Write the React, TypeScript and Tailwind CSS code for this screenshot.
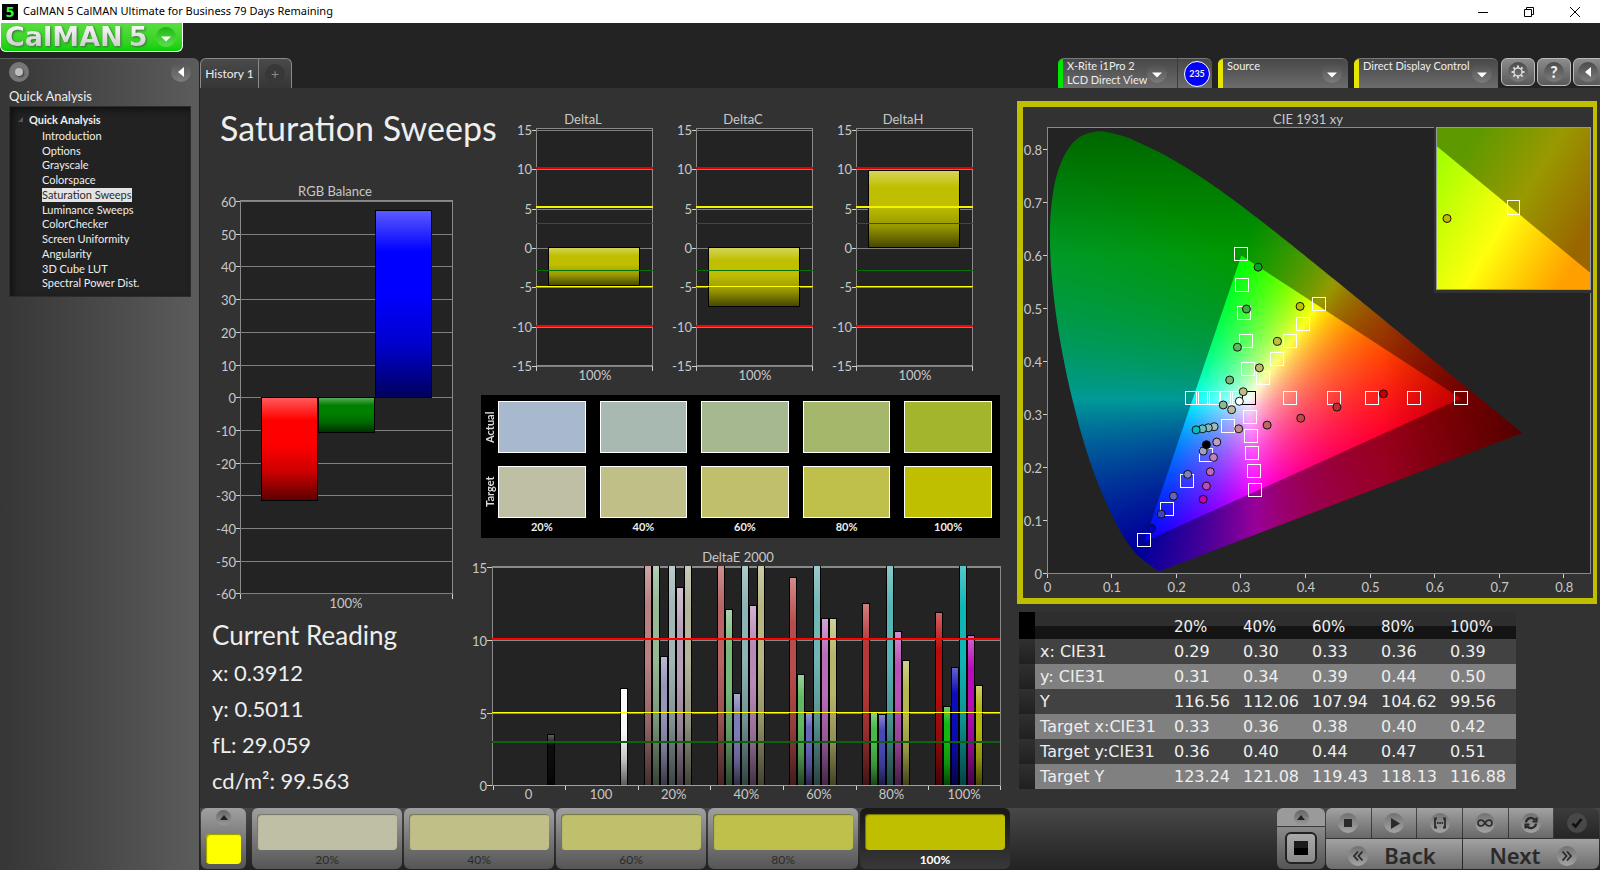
import React from 'react'

interface IBar {
    slot: number
    value: number
    color: string
}

interface ILimit {
    y: number
    color: string
    width: number
}

interface IMarker {
    x: number
    y: number
    color: string
}

const treeItems = [
    'Introduction',
    'Options',
    'Grayscale',
    'Colorspace',
    'Saturation Sweeps',
    'Luminance Sweeps',
    'ColorChecker',
    'Screen Uniformity',
    'Angularity',
    '3D Cube LUT',
    'Spectral Power Dist.',
]

const levels = ['20%', '40%', '60%', '80%', '100%']
const actualColors = ['#a9b9cd', '#a8b9b1', '#a6b890', '#a5b76b', '#a3b42d']
const targetColors = ['#bfbfa5', '#c0bf88', '#bfbf6c', '#bfbf4b', '#bfbf00']

const readings = ['x: 0.3912', 'y: 0.5011', 'fL: 29.059', 'cd/m²: 99.563']

const tableRows = [
    ['x: CIE31', '0.29', '0.30', '0.33', '0.36', '0.39'],
    ['y: CIE31', '0.31', '0.34', '0.39', '0.44', '0.50'],
    ['Y', '116.56', '112.06', '107.94', '104.62', '99.56'],
    ['Target x:CIE31', '0.33', '0.36', '0.38', '0.40', '0.42'],
    ['Target y:CIE31', '0.36', '0.40', '0.44', '0.47', '0.51'],
    ['Target Y', '123.24', '121.08', '119.43', '118.13', '116.88'],
]

const deltaLimits: ILimit[] = [
    { y: 60, color: '#e00000', width: 2 },
    { y: 99, color: '#f4f400', width: 2 },
    { y: 115.5, color: '#087008', width: 1 },
    { y: 162.5, color: '#087008', width: 1 },
    { y: 178.5, color: '#ffff00', width: 1 },
    { y: 218, color: '#ff0000', width: 2 },
]

// red, green, blue, cyan, magenta, yellow, gray
const deltaE: { label: string; bars: IBar[] }[] = [
    { label: '0', bars: [{ slot: 6, value: 3.5, color: '#0c0c0c' }] },
    { label: '100', bars: [{ slot: 6, value: 6.7, color: '#f8f8f8' }] },
    {
        label: '20%',
        bars: [
            { slot: 0, value: 16, color: '#b98080' },
            { slot: 1, value: 16, color: '#95b895' },
            { slot: 2, value: 8.9, color: '#9595bb' },
            { slot: 3, value: 16, color: '#a2b6b6' },
            { slot: 4, value: 13.6, color: '#b89fb8' },
            { slot: 5, value: 16, color: '#b5b59c' },
        ],
    },
    {
        label: '40%',
        bars: [
            { slot: 0, value: 16, color: '#b86464' },
            { slot: 1, value: 12.1, color: '#7ab87a' },
            { slot: 2, value: 6.3, color: '#7c7cb8' },
            { slot: 3, value: 16, color: '#8cb4b4' },
            { slot: 4, value: 12.4, color: '#b888b8' },
            { slot: 5, value: 16, color: '#b6b682' },
        ],
    },
    {
        label: '60%',
        bars: [
            { slot: 0, value: 14.3, color: '#b84c4c' },
            { slot: 1, value: 7.6, color: '#60b860' },
            { slot: 2, value: 5.1, color: '#6464b8' },
            { slot: 3, value: 16, color: '#72b5b5' },
            { slot: 4, value: 11.5, color: '#b86cb8' },
            { slot: 5, value: 11.5, color: '#b6b668' },
        ],
    },
    {
        label: '80%',
        bars: [
            { slot: 0, value: 12.5, color: '#b83838' },
            { slot: 1, value: 5, color: '#48b848' },
            { slot: 2, value: 4.9, color: '#4848b8' },
            { slot: 3, value: 16, color: '#58b5b5' },
            { slot: 4, value: 10.6, color: '#b850b8' },
            { slot: 5, value: 8.6, color: '#b6b650' },
        ],
    },
    {
        label: '100%',
        bars: [
            { slot: 0, value: 11.9, color: '#b80c0c' },
            { slot: 1, value: 5.4, color: '#10b810' },
            { slot: 2, value: 8.1, color: '#0c0cb8' },
            { slot: 3, value: 16, color: '#10b5b5' },
            { slot: 4, value: 10.3, color: '#b80cb8' },
            { slot: 5, value: 6.9, color: '#b6b610' },
        ],
    },
]

const locusPoints = [
    [0.1741, 0.005], [0.1714, 0.0051], [0.1644, 0.0109], [0.1566, 0.0177], [0.144, 0.0297], [0.1355, 0.0399],
    [0.1241, 0.0578], [0.1096, 0.0868], [0.0913, 0.1327], [0.0687, 0.2007], [0.0454, 0.295], [0.0235, 0.4127],
    [0.0082, 0.5384], [0.0039, 0.6548], [0.0139, 0.7502], [0.0389, 0.812], [0.0743, 0.8338], [0.1142, 0.8262],
    [0.1547, 0.8059], [0.1929, 0.7816], [0.2296, 0.7543], [0.2658, 0.7243], [0.3016, 0.6923], [0.3373, 0.6589],
    [0.3731, 0.6245], [0.4087, 0.5896], [0.4441, 0.5547], [0.4788, 0.5202], [0.5125, 0.4866], [0.5752, 0.4242],
    [0.627, 0.3725], [0.6658, 0.334], [0.6915, 0.3083], [0.719, 0.2809], [0.7347, 0.2653],
]
const gamut = [[0.64, 0.33], [0.3, 0.6], [0.15, 0.06]]

// Catmull-Rom subdivision of an open curve
const smooth = (pts: number[][], steps: number) => {
    const out: number[][] = []
    for (let i = 0; i < pts.length - 1; i++) {
        const p0 = pts[Math.max(0, i - 1)]
        const p1 = pts[i]
        const p2 = pts[i + 1]
        const p3 = pts[Math.min(pts.length - 1, i + 2)]
        for (let s = 0; s < steps; s++) {
            const t = s / steps
            out.push([0, 1].map((k) =>
                0.5 * (2 * p1[k] + (p2[k] - p0[k]) * t + (2 * p0[k] - 5 * p1[k] + 4 * p2[k] - p3[k]) * t * t +
                    (3 * p1[k] - p0[k] - 3 * p2[k] + p3[k]) * t * t * t)
            ))
        }
    }
    out.push(pts[pts.length - 1])
    return out
}

const locus = smooth(locusPoints, 6)

const targets: number[][] = [
    [0.3, 0.603], [0.301, 0.544], [0.304, 0.492], [0.307, 0.438], [0.31, 0.386],
    [0.42, 0.509], [0.396, 0.47], [0.376, 0.438], [0.356, 0.404], [0.333, 0.368],
    [0.223, 0.331], [0.241, 0.331], [0.258, 0.331], [0.276, 0.331], [0.294, 0.331],
    [0.375, 0.331], [0.444, 0.331], [0.502, 0.331], [0.567, 0.331], [0.64, 0.331],
    [0.313, 0.295], [0.315, 0.259], [0.316, 0.227], [0.319, 0.193], [0.321, 0.157],
    [0.279, 0.278], [0.246, 0.224], [0.216, 0.174], [0.185, 0.122], [0.149, 0.063],
]

const measured: IMarker[] = [
    { x: 0.326, y: 0.578, color: '#00a81c' },
    { x: 0.308, y: 0.499, color: '#3cb43c' },
    { x: 0.294, y: 0.427, color: '#5fb85f' },
    { x: 0.282, y: 0.365, color: '#74b874' },
    { x: 0.272, y: 0.318, color: '#90b890' },
    { x: 0.391, y: 0.504, color: '#bfbf00' },
    { x: 0.356, y: 0.438, color: '#bcbc48' },
    { x: 0.328, y: 0.388, color: '#bcbc68' },
    { x: 0.303, y: 0.343, color: '#bdbd85' },
    { x: 0.285, y: 0.309, color: '#bcbca0' },
    { x: 0.258, y: 0.277, color: '#a0bcbc' },
    { x: 0.249, y: 0.275, color: '#84bcbc' },
    { x: 0.24, y: 0.273, color: '#68bcbc' },
    { x: 0.23, y: 0.271, color: '#00c0c0' },
    { x: 0.296, y: 0.273, color: '#c09090' },
    { x: 0.34, y: 0.28, color: '#c06464' },
    { x: 0.392, y: 0.293, color: '#c04848' },
    { x: 0.448, y: 0.314, color: '#c03030' },
    { x: 0.52, y: 0.339, color: '#c00000' },
    { x: 0.262, y: 0.248, color: '#bfa0bf' },
    { x: 0.257, y: 0.219, color: '#bf84bf' },
    { x: 0.252, y: 0.192, color: '#bf68bf' },
    { x: 0.246, y: 0.165, color: '#bf48bf' },
    { x: 0.241, y: 0.14, color: '#bf00bf' },
    { x: 0.241, y: 0.231, color: '#a0a0bf' },
    { x: 0.246, y: 0.243, color: '#000000' },
    { x: 0.217, y: 0.187, color: '#8080bf' },
    { x: 0.195, y: 0.146, color: '#6464bf' },
    { x: 0.176, y: 0.112, color: '#4444bf' },
    { x: 0.161, y: 0.085, color: '#0000bf' },
    { x: 0.297, y: 0.325, color: '#ffffff' },
]

// chromaticity to plot coordinates
const px = (x: number) => 24.5 + 646 * x
const py = (y: number) => 466.5 - 530 * y

const toPoints = (poly: number[][]) => poly.map(([x, y]) => `${px(x).toFixed(1)},${py(y).toFixed(1)}`).join(' ')

const xyToColor = (x: number, y: number, gain: number) => {
    const X = x / y
    const Z = (1 - x - y) / y
    const lin = [
        3.2406 * X - 1.5372 - 0.4986 * Z,
        -0.9689 * X + 1.8758 + 0.0415 * Z,
        0.0557 * X - 0.204 + 1.057 * Z,
    ].map((c) => Math.max(0, c))
    const max = Math.max(...lin)
    const fade = Math.min(1, 1 - Math.max(0, x - 0.52) * 2.1) * Math.min(1, 1 - Math.max(0, y - 0.6) * 1.4)
    const rgb = lin.map((c) => Math.round((255 * gain * fade * c) / max))
    return `rgb(${rgb.join(',')})`
}

// leftmost and rightmost x of a polygon at height y
const span = (poly: number[][], y: number) => {
    const xs: number[] = []
    poly.forEach(([x1, y1], i) => {
        const [x2, y2] = poly[(i + 1) % poly.length]
        if ((y1 <= y && y2 > y) || (y2 <= y && y1 > y)) {
            xs.push(x1 + ((y - y1) / (y2 - y1)) * (x2 - x1))
        }
    })
    return xs.length ? [Math.min(...xs), Math.max(...xs)] : null
}

const Strips: React.FC<{ id: string; poly: number[][]; gain: number; stops: number }> = ({ id, poly, gain, stops }) => {
    const rows: React.ReactNode[] = []
    for (let top = 22; top < 466; top += 2) {
        const y = Math.max(0.004, (466.5 - top - 1) / 530)
        const s = span(poly, y) || span(poly, y - 0.004) || span(poly, y + 0.004)
        if (!s) continue
        const a = s[0] - 0.012
        const b = s[1] + 0.012
        rows.push(
            <g key={top}>
                <linearGradient id={`${id}${top}`} gradientUnits="userSpaceOnUse" x1={px(a)} x2={px(b)} y1="0" y2="0">
                    {Array.from({ length: stops + 1 }, (_, i) => (
                        <stop key={i} offset={i / stops} stopColor={xyToColor(a + ((b - a) * i) / stops, y, gain)} />
                    ))}
                </linearGradient>
                <rect x={px(a)} y={top} width={px(b) - px(a)} height="2" fill={`url(#${id}${top})`} shapeRendering="crispEdges" />
            </g>
        )
    }
    return (
        <g clipPath={`url(#${id}clip)`}>
            <clipPath id={`${id}clip`}>
                <polygon points={toPoints(poly)} />
            </clipPath>
            {rows}
        </g>
    )
}

const GlossBar: React.FC<{ x: number; y: number; w: number; h: number; color: string }> = ({ x, y, w, h, color }) => (
    <g shapeRendering="crispEdges">
        <rect x={x} y={y} width={w} height={h} fill={color} />
        <rect x={x} y={y} width={w} height={h} fill="url(#gloss)" stroke="#000" />
    </g>
)

const Gloss: React.FC = () => (
    <svg width="0" height="0" className="absolute" aria-hidden="true">
        <linearGradient id="gloss" x1="0" y1="0" x2="0" y2="1">
            <stop offset="0" stopColor="#fff" stopOpacity="0.36" />
            <stop offset="0.22" stopColor="#fff" stopOpacity="0" />
            <stop offset="0.45" stopColor="#000" stopOpacity="0" />
            <stop offset="0.72" stopColor="#000" stopOpacity="0.2" />
            <stop offset="1" stopColor="#000" stopOpacity="0.64" />
        </linearGradient>
    </svg>
)

const DeltaChart: React.FC<{ title: string; top: number; height: number }> = ({ title, top, height }) => (
    <svg viewBox="0 0 160 280" className="h-auto w-full text-[13px]" role="img" aria-label={title}>
        <text x="83" y="16" textAnchor="middle" fill="#c8c8c8">{title}</text>
        <rect x="36.5" y="20.5" width="116" height="237" fill="#232323" stroke="#8a8a8a" shapeRendering="crispEdges" />
        {[15, 10, 5, 0, -5, -10, -15].map((v, i) => {
            const y = Math.round(22 + i * 39.3) + 0.5
            return (
                <g key={v}>
                    <path d={`M36 ${y}H152`} stroke="#808080" shapeRendering="crispEdges" />
                    <path d={`M32 ${y}H36`} stroke="#d0d0d0" shapeRendering="crispEdges" />
                    <text x="32" y={y + 4} textAnchor="end" fill="#c8c8c8">{v}</text>
                </g>
            )
        })}
        <path d="M36.5 258V263M152.5 258V263" stroke="#d0d0d0" shapeRendering="crispEdges" />
        <GlossBar x={48.5} y={top + 0.5} w={91} h={height} color="#bfbf00" />
        {deltaLimits.map((l) => (
            <path key={l.y} d={`M36 ${l.y}H153`} stroke={l.color} strokeWidth={l.width} shapeRendering="crispEdges" />
        ))}
        <text x="95" y="272" textAnchor="middle" fill="#c8c8c8">100%</text>
    </svg>
)

const RgbBalance: React.FC = () => (
    <svg viewBox="0 0 270 435" className="h-auto w-full text-[13px]" role="img" aria-label="RGB Balance">
        <text x="135" y="16" textAnchor="middle" fill="#c8c8c8">RGB Balance</text>
        <rect x="40.5" y="20.5" width="212" height="393" fill="#232323" stroke="#8a8a8a" shapeRendering="crispEdges" />
        {[60, 50, 40, 30, 20, 10, 0, -10, -20, -30, -40, -50, -60].map((v, i) => {
            const y = Math.round(21 + i * 32.7) + 0.5
            return (
                <g key={v}>
                    <path d={`M40 ${y}H252`} stroke="#808080" shapeRendering="crispEdges" />
                    <path d={`M36 ${y}H40`} stroke="#d0d0d0" shapeRendering="crispEdges" />
                    <text x="36" y={y + 5} textAnchor="end" fill="#c8c8c8">{v}</text>
                </g>
            )
        })}
        <path d="M40.5 414V419M252.5 414V419" stroke="#d0d0d0" shapeRendering="crispEdges" />
        <GlossBar x={61.5} y={217.5} w={56} h={103} color="#ff0000" />
        <GlossBar x={118.5} y={217.5} w={56} h={35} color="#008000" />
        <GlossBar x={175.5} y={30.5} w={56} h={187} color="#0000ff" />
        <text x="146" y="428" textAnchor="middle" fill="#c8c8c8">100%</text>
    </svg>
)

const DeltaE: React.FC = () => (
    <svg viewBox="0 0 540 260" className="h-auto w-full text-[13px]" role="img" aria-label="DeltaE 2000">
        <text x="268" y="17" textAnchor="middle" fill="#c8c8c8">DeltaE 2000</text>
        <rect x="22.5" y="21.5" width="508" height="219" fill="#232323" stroke="#8a8a8a" shapeRendering="crispEdges" />
        {[15, 10, 5, 0].map((v, i) => {
            const y = Math.round(22 + i * 72.8) + 0.5
            return (
                <g key={v}>
                    <path d={`M22 ${y}H530`} stroke="#8a8a8a" shapeRendering="crispEdges" />
                    <path d={`M17 ${y}H22`} stroke="#d0d0d0" shapeRendering="crispEdges" />
                    <text x="17" y={y + 5} textAnchor="end" fill="#c8c8c8">{v}</text>
                </g>
            )
        })}
        <clipPath id="plotClip">
            <rect x="22" y="21" width="509" height="220" />
        </clipPath>
        {deltaE.map((g, i) => {
            const left = 22.5 + i * 72.6
            return (
                <g key={g.label}>
                    <g clipPath="url(#plotClip)">
                        {g.bars.map((b) => {
                            const top = b.value > 15 ? 10.5 : Math.round(240 - b.value * 14.55) + 0.5
                            return <GlossBar key={b.slot} x={Math.round(left + 6.5 + b.slot * 8) + 0.5} y={top} w={7} h={240.5 - top} color={b.color} />
                        })}
                    </g>
                    <path d={`M${Math.round(left) + 0.5} 241V245`} stroke="#d0d0d0" shapeRendering="crispEdges" />
                    <text x={left + 36} y="254" textAnchor="middle" fill="#c8c8c8">{g.label}</text>
                </g>
            )
        })}
        <path d="M530.5 241V245" stroke="#d0d0d0" shapeRendering="crispEdges" />
        <path d="M22 94H530" stroke="#f00" strokeWidth="2" shapeRendering="crispEdges" />
        <path d="M22 167.5H530" stroke="#ff0" shapeRendering="crispEdges" />
        <path d="M22 197H530" stroke="#0f600f" strokeWidth="2" shapeRendering="crispEdges" />
        <path d="M22.5 240.5H530" stroke="#a0a0a0" shapeRendering="crispEdges" />
    </svg>
)

const CieChart: React.FC = () => (
    <svg viewBox="0 0 570 491" className="h-auto w-full text-[13px]" role="img" aria-label="CIE 1931 xy">
        <text x="285" y="17" textAnchor="middle" fill="#c8c8c8">CIE 1931 xy</text>
        <rect x="24.5" y="20.5" width="543" height="446" fill="#232323" stroke="#8a8a8a" shapeRendering="crispEdges" />
        {[0, 0.1, 0.2, 0.3, 0.4, 0.5, 0.6, 0.7, 0.8].map((v) => (
            <g key={v}>
                <path
                    d={`M20 ${Math.round(py(v)) - 0.5}H24M${Math.round(px(v)) - 0.5} 467V471`}
                    stroke="#d0d0d0"
                    shapeRendering="crispEdges"
                />
                <text x="19" y={py(v) + 5} textAnchor="end" fill="#c8c8c8">{v}</text>
                <text x={px(v)} y="485" textAnchor="middle" fill="#c8c8c8">{v}</text>
            </g>
        ))}
        <Strips id="outer" poly={locus} gain={0.6} stops={44} />
        <Strips id="inner" poly={gamut} gain={1} stops={40} />
        <g fill="none" stroke="#fff" strokeWidth="1" shapeRendering="crispEdges">
            {targets.map(([x, y], i) => (
                <rect key={i} x={Math.round(px(x)) - 6.5} y={Math.round(py(y)) - 6.5} width="13" height="13" />
            ))}
            <rect x="219.5" y="284.5" width="13" height="13" stroke="#000" />
        </g>
        {measured.map((m, i) => (
            <circle key={i} cx={px(m.x)} cy={py(m.y)} r="4" fill={m.color} stroke="#111" strokeWidth="1" />
        ))}
        <linearGradient id="zoomDim" gradientUnits="userSpaceOnUse" x1="430" y1="66" x2="554" y2="141">
            <stop offset="0" stopColor="#5f9900" />
            <stop offset="0.5" stopColor="#999900" />
            <stop offset="1" stopColor="#996600" />
        </linearGradient>
        <linearGradient id="zoomLit" gradientUnits="userSpaceOnUse" x1="400" y1="58" x2="554" y2="151">
            <stop offset="0" stopColor="#99ff00" />
            <stop offset="0.55" stopColor="#ffff0c" />
            <stop offset="0.9" stopColor="#ffb400" />
            <stop offset="1" stopColor="#ffa000" />
        </linearGradient>
        <rect x="411" y="18" width="159" height="168" fill="#323232" />
        <rect x="413.5" y="20.5" width="154" height="162" fill="url(#zoomDim)" />
        <polygon points="413.5,39 567.5,166 567.5,182.5 413.5,182.5" fill="url(#zoomLit)" />
        <rect x="413.5" y="20.5" width="154" height="162" fill="none" stroke="#999" shapeRendering="crispEdges" />
        <rect x="484.5" y="93.5" width="12" height="14" fill="none" stroke="#fff" shapeRendering="crispEdges" />
        <circle cx="424" cy="111.5" r="4" fill="#bfbf00" stroke="#111" />
    </svg>
)

const Knob: React.FC<{ children: React.ReactNode }> = ({ children }) => (
    <span className="flex size-5 shrink-0 items-center justify-center rounded-full bg-linear-to-b from-[#4c4c4c] to-[#7c7c7c]">
        {children}
    </span>
)

const DownArrow: React.FC = () => (
    <svg width="10" height="6" viewBox="0 0 10 6" className="mt-1">
        <path d="M0 0.5H10L5 5.5Z" fill="#fff" />
    </svg>
)

const DeviceBox: React.FC<{ lines: string[]; bar: string; className: string }> = ({ lines, bar, className }) => (
    <button className={`flex h-[30px] items-start overflow-hidden rounded-t-md border-t border-[#7a7a7a] bg-linear-to-b from-[#484848] to-[#6c6c6c] text-left ${className}`}>
        <span className={`mr-1 h-full w-[5px] shrink-0 ${bar}`} />
        <span className="flex-1 text-[11px] leading-[14px] whitespace-nowrap">
            {lines.map((l) => (
                <span key={l} className="block">{l}</span>
            ))}
        </span>
        <span className="mt-1 mr-[6px] flex">
            <Knob><DownArrow /></Knob>
        </span>
    </button>
)

const TitleBar: React.FC = () => (
    <div className="flex h-[23px] items-center bg-white px-[2px] font-['Noto_Sans',sans-serif] text-black">
        <span className="flex size-4 items-center justify-center bg-black text-[15px] font-bold text-[#2bff2b]">5</span>
        <span className="ml-[5px] flex-1 text-[11px]">CalMAN 5 CalMAN Ultimate for Business 79 Days Remaining</span>
        <button aria-label="Minimize" className="flex w-[46px] justify-center">
            <svg width="10" height="10"><path d="M0 5.5H10" stroke="#000" /></svg>
        </button>
        <button aria-label="Restore" className="flex w-[46px] justify-center">
            <svg width="10" height="10" fill="none" stroke="#000"><path d="M0.5 2.5H7.5V9.5H0.5ZM2.5 2.5V0.5H9.5V7.5H7.5" /></svg>
        </button>
        <button aria-label="Close" className="flex w-[46px] justify-center">
            <svg width="10" height="10" stroke="#000"><path d="M0 0L10 10M10 0L0 10" /></svg>
        </button>
    </div>
)

const logoText = 'bg-linear-to-b from-white to-[#c4c4c4] bg-clip-text leading-[28px] font-bold text-transparent drop-shadow-[1px_1px_1px_#3c6b3c]'

const Sidebar: React.FC = () => (
    <div className="flex w-[199px] shrink-0 flex-col">
        <button className="mb-[6px] flex h-[29px] w-[183px] items-center rounded-b-md border border-t-0 border-white bg-linear-to-b from-[#5add40] to-[#00d000] pl-1 font-['DejaVu_Sans',sans-serif] text-[27px]">
            <span className={logoText}>CalMAN</span>
            <span className={`ml-[6px] ${logoText}`}>5</span>
            <span className="ml-auto mr-[6px] flex size-5 items-center justify-center rounded-full bg-linear-to-b from-[#12b812] to-[#5ce04a]">
                <DownArrow />
            </span>
        </button>
        <aside className="flex-1 rounded-tr-md border-t border-[#5c5c5c] bg-linear-to-r from-[#363636] to-[#5c5c5c] px-[9px] pr-2">
            <div className="mt-[3px] flex items-center justify-between">
                <span className="flex size-5 items-center justify-center rounded-full bg-[#777]">
                    <span className="size-2 rounded-full bg-[#bdbdbd] shadow-[1px_1px_2px_#333]" />
                </span>
                <button aria-label="Collapse" className="flex size-5 items-center justify-center rounded-full bg-linear-to-b from-[#555] to-[#7c7c7c]">
                    <svg width="6" height="10"><path d="M6 0V10L0 5Z" fill="#fff" /></svg>
                </button>
            </div>
            <h2 className="mt-1 text-[13px] leading-5">Quick Analysis</h2>
            <nav className="h-[191px] border border-[#2c2c2c] bg-[#222] pt-[6px] pl-2 shadow-[inset_3px_3px_6px_#111]">
                <div className="flex items-center text-[11px] leading-[14px] font-bold">
                    <svg width="6" height="6" className="mr-[5px]"><path d="M5 0V5H0Z" fill="#555" /></svg>
                    Quick Analysis
                </div>
                <ul className="mt-[2px] grid h-[162px] auto-rows-fr pl-6 text-[11px] leading-[14px]">
                    {treeItems.map((item) => (
                        <li key={item}>
                            <a href="#" className={item === 'Saturation Sweeps' ? 'block w-fit bg-[#e4e4e4] text-[#2a2a2a]' : 'block w-fit'}>
                                {item}
                            </a>
                        </li>
                    ))}
                </ul>
            </nav>
        </aside>
    </div>
)

const squareButton =
    'flex h-7 w-[34px] items-center justify-center rounded-md border border-[#bbb] bg-linear-to-b from-[#8c8c8c] to-[#5a5a5a]'

const Header: React.FC = () => (
    <header className="flex h-[65px] items-end overflow-hidden">
        <div className="flex h-[30px] overflow-hidden rounded-t-md border border-b-0 border-[#8a8a8a] bg-linear-to-b from-[#4a4a4a] to-[#363636]">
            <button className="w-[58px] border-r border-[#8a8a8a] text-xs">History 1</button>
            <button aria-label="Add tab" className="flex w-8 items-center justify-center">
                <span className="flex size-5 items-center justify-center rounded-full bg-[#383838] text-sm text-[#8a8a8a]">+</span>
            </button>
        </div>
        <div className="ml-auto flex shrink-0 items-start">
            <DeviceBox lines={['X-Rite i1Pro 2', 'LCD Direct View']} bar="bg-[#00e600]" className="w-[119px] rounded-r-none pr-1" />
            <div className="mr-[6px] flex h-[30px] w-[35px] items-center justify-center rounded-tr-md border-t border-l border-[#3c3c3c] border-t-[#7a7a7a] bg-linear-to-b from-[#484848] to-[#6c6c6c] pl-1">
                <span className="flex size-[26px] items-center justify-center rounded-full border border-white bg-[#0000ff] text-[9px] font-bold">235</span>
            </div>
            <DeviceBox lines={['Source']} bar="bg-[#e6e600]" className="mr-[6px] w-[130px]" />
            <DeviceBox lines={['Direct Display Control']} bar="bg-[#e6e600]" className="mr-[3px] w-36" />
            <button aria-label="Settings" className={`mr-[2px] ${squareButton}`}>
                <Knob>
                    <svg width="14" height="14" viewBox="0 0 14 14" stroke="#d8d8d8" fill="none">
                        <circle cx="7" cy="7" r="4" strokeWidth="1.5" />
                        <path d="M7 0.5V3M7 11V13.5M0.5 7H3M11 7H13.5M2.4 2.4L4.2 4.2M9.8 9.8L11.6 11.6M2.4 11.6L4.2 9.8M9.8 4.2L11.6 2.4" strokeWidth="2" />
                    </svg>
                </Knob>
            </button>
            <button aria-label="Help" className={`mr-[2px] ${squareButton}`}>
                <Knob><span className="text-base font-black">?</span></Knob>
            </button>
            <button aria-label="Collapse panel" className={`-mr-[7px] justify-start pl-1 ${squareButton}`}>
                <Knob>
                    <svg width="6" height="10"><path d="M6 0V10L0 5Z" fill="#fff" /></svg>
                </Knob>
            </button>
        </div>
    </header>
)

const SwatchRow: React.FC<{ label: string; colors: string[] }> = ({ label, colors }) => (
    <div className="flex h-[52px]">
        <span className="w-[17px] rotate-180 text-center text-[11px] leading-[17px] font-bold text-[#ddd] [writing-mode:vertical-rl]">{label}</span>
        <div className="grid flex-1 grid-cols-5 gap-[14px]">
            {colors.map((c) => (
                <div key={c} className="border border-white" style={{ backgroundColor: c }} />
            ))}
        </div>
    </div>
)

const Swatches: React.FC = () => (
    <div className="mt-[7px] mr-[10px] ml-[11px] h-[143px] bg-black pt-[6px] pr-2">
        <SwatchRow label="Actual" colors={actualColors} />
        <div className="h-[13px]" />
        <SwatchRow label="Target" colors={targetColors} />
        <div className="grid grid-cols-5 gap-[14px] pt-px pl-[17px] text-center text-[11px] leading-4 font-bold">
            {levels.map((l) => (
                <span key={l}>{l}</span>
            ))}
        </div>
    </div>
)

const ReadingTable: React.FC = () => (
    <table className="mt-2 ml-[9px] w-[497px] table-fixed border-collapse text-left font-['DejaVu_Sans',sans-serif] text-[16px] text-[#eee]">
        <colgroup>
            <col className="w-4" />
            <col className="w-[139px]" />
            <col className="w-[69px]" />
            <col className="w-[69px]" />
            <col className="w-[69px]" />
            <col className="w-[69px]" />
            <col />
        </colgroup>
        <thead>
            <tr className="h-[27px] bg-linear-to-b from-[#2e2e2e] from-50% to-[#141414] to-50%">
                <th className="bg-black p-0" />
                <th className="p-0" />
                {levels.map((l) => (
                    <th key={l} className="p-0 pt-1 text-[15px] leading-[23px] font-normal">{l}</th>
                ))}
            </tr>
        </thead>
        <tbody>
            {tableRows.map((row, i) => (
                <tr key={row[0]} className={i % 2 ? 'h-[25px] bg-[#808080]' : 'h-[25px] bg-[#424242]'}>
                    <td className="bg-linear-to-b from-[#303030] to-[#202020] p-0" />
                    {row.map((cell, j) => (
                        <td key={j} className={j === 0 ? 'p-0 pl-[5px] leading-[25px] whitespace-nowrap' : 'p-0 leading-[25px]'}>
                            {cell}
                        </td>
                    ))}
                </tr>
            ))}
        </tbody>
    </table>
)

const Disc: React.FC<{ children: React.ReactNode; dark?: boolean }> = ({ children, dark }) => (
    <span
        className={
            dark
                ? 'flex size-5 items-center justify-center rounded-full bg-[#484848]'
                : 'flex size-5 items-center justify-center rounded-full bg-linear-to-b from-[#727272] to-[#a4a4a4]'
        }
    >
        <svg width="20" height="20" viewBox="0 0 20 20" fill="none" stroke={dark ? '#111' : '#2a2a2a'} strokeWidth="1.8">
            {children}
        </svg>
    </span>
)

const UpKnob: React.FC = () => (
    <span className="flex size-[15px] items-center justify-center rounded-full bg-linear-to-b from-[#666] to-[#999]">
        <svg width="8" height="5"><path d="M0 5H8L4 0Z" fill="#222" /></svg>
    </span>
)

const controls: { name: string; icon: React.ReactNode }[] = [
    { name: 'Stop', icon: <path d="M6 6H14V14H6Z" fill="#2a2a2a" stroke="none" /> },
    { name: 'Play', icon: <path d="M7 5L16 10.5L7 16Z" fill="#2a2a2a" stroke="none" /> },
    { name: 'Range', icon: <path d="M7 5.5H5V14.5H7M13 5.5H15V14.5H13M7 10H8.5M9.3 10H10.8M11.6 10H13" /> },
    {
        name: 'Loop',
        icon: <path d="M10 10C8.5 7.5 7.5 7 6 7A3 3 0 0 0 6 13C7.5 13 8.5 12.5 10 10C11.5 7.5 12.5 7 14 7A3 3 0 0 1 14 13C12.5 13 11.5 12.5 10 10Z" strokeWidth="1.6" />,
    },
    {
        name: 'Refresh',
        icon: <path d="M5 9.5A5 5 0 0 1 14 7M15.5 4.5V8.5H11.5M15 10.5A5 5 0 0 1 6 13M4.5 15.5V11.5H8.5" strokeWidth="2.2" />,
    },
]

const greyButton = 'flex items-center justify-center bg-linear-to-b from-[#a2a2a2] to-[#686868]'

const Footer: React.FC = () => (
    <footer className="flex h-[62px] items-start bg-linear-to-b from-[#484848] to-[#222] pl-px">
        <button aria-label="Pattern color" className="mr-[6px] flex h-[61px] w-[45px] flex-col items-center rounded-md bg-linear-to-b from-[#a0a0a0] to-[#555] pt-[2px]">
            <UpKnob />
            <span className="mt-[9px] h-[30px] w-[35px] rounded-sm bg-[#ffff00] shadow-[inset_1px_1px_1px_#999900]" />
        </button>
        <div className="flex gap-[2px]">
            {levels.map((l, i) => (
                <button
                    key={l}
                    className={
                        i === 4
                            ? 'h-[61px] w-[150px] rounded-md bg-linear-to-b from-[#181818] to-[#383838] px-[5px] pt-[5px] text-xs font-bold text-white'
                            : 'h-[61px] w-[150px] rounded-md bg-linear-to-b from-[#a0a0a0] to-[#555] px-[5px] pt-[5px] text-xs text-[#2a2a2a]'
                    }
                >
                    <span
                        className="block h-9 rounded-sm shadow-[inset_1px_1px_1px_#00000066]"
                        style={{ backgroundColor: targetColors[i] }}
                    />
                    <span className="block pt-[2px] leading-4">{l}</span>
                </button>
            ))}
        </div>
        <div className="ml-auto flex h-[61px] gap-px pr-px">
            <div className="flex w-12 flex-col gap-px">
                <button aria-label="Expand" className="flex h-[18px] items-center justify-center rounded-t-md bg-[#9a9a9a]">
                    <UpKnob />
                </button>
                <button aria-label="Meter window" className="flex flex-1 items-center justify-center rounded-b-md bg-linear-to-b from-[#8a8a8a] to-[#555]">
                    <span className="flex size-8 items-center justify-center rounded-md border-2 border-[#222] bg-linear-to-b from-[#aaa] to-[#8a8a8a]">
                        <span className="size-[14px] bg-linear-to-b from-[#1c1c1c] from-50% to-black to-50%" />
                    </span>
                </button>
            </div>
            <div className="flex w-[273px] flex-col gap-px">
                <div className="flex h-[30px] gap-px overflow-hidden rounded-t-md">
                    {controls.map((c) => (
                        <button key={c.name} aria-label={c.name} className={`flex-1 ${greyButton}`}>
                            <Disc>{c.icon}</Disc>
                        </button>
                    ))}
                    <button aria-label="Accept" className="flex flex-1 items-center justify-center bg-linear-to-b from-[#3c3c3c] to-[#262626]">
                        <Disc dark><path d="M5.5 10.5L8.5 13.5L14.5 6" strokeWidth="2.6" /></Disc>
                    </button>
                </div>
                <div className="grid h-[30px] grid-cols-2 gap-px overflow-hidden rounded-b-md font-['Noto_Sans',sans-serif] text-[22px] font-semibold text-[#2a2a2a]">
                    <button className={`gap-4 pr-1 ${greyButton}`}>
                        <Disc><path d="M10 5.5L6 10L10 14.5M14.5 5.5L10.5 10L14.5 14.5" /></Disc>
                        Back
                    </button>
                    <button className={`gap-4 pl-1 ${greyButton}`}>
                        Next
                        <Disc><path d="M5.5 5.5L9.5 10L5.5 14.5M10 5.5L14 10L10 14.5" /></Disc>
                    </button>
                </div>
            </div>
        </div>
    </footer>
)

const App: React.FC = () => {
    return (
        <div className="flex min-h-screen flex-col overflow-hidden bg-[#232323] font-['Lato',sans-serif] text-[#eee]">
            <Gloss />
            <TitleBar />
            <div className="flex flex-1">
                <Sidebar />
                <div className="ml-px flex min-w-0 flex-1 flex-col">
                    <Header />
                    <main className="grid flex-1 grid-cols-[27fr_54fr_59fr] bg-[#323232]">
                        {/* balance and reading */}
                        <section className="min-w-0">
                            <h1 className="mt-5 mb-8 ml-5 text-[34px] leading-10 whitespace-nowrap">Saturation Sweeps</h1>
                            <RgbBalance />
                            <div className="ml-3">
                                <h2 className="mt-[2px] text-[26px] leading-9">Current Reading</h2>
                                <div className="mt-[2px]">
                                    {readings.map((r) => (
                                        <p key={r} className="text-[22px] leading-9">{r}</p>
                                    ))}
                                </div>
                            </div>
                        </section>
                        {/* delta charts */}
                        <section className="min-w-0">
                            <div className="mt-5 grid grid-cols-3 px-[30px]">
                                <DeltaChart title="DeltaL" top={139} height={38} />
                                <DeltaChart title="DeltaC" top={139} height={59} />
                                <DeltaChart title="DeltaH" top={62} height={77} />
                            </div>
                            <Swatches />
                            <div className="mt-[7px]">
                                <DeltaE />
                            </div>
                        </section>
                        {/* chromaticity */}
                        <section className="min-w-0">
                            <div className="mt-[13px] mr-[3px] ml-[7px] border-6 border-r-4 border-[#bfbf00]">
                                <CieChart />
                            </div>
                            <ReadingTable />
                        </section>
                    </main>
                    <Footer />
                </div>
            </div>
        </div>
    )
}

export default App
